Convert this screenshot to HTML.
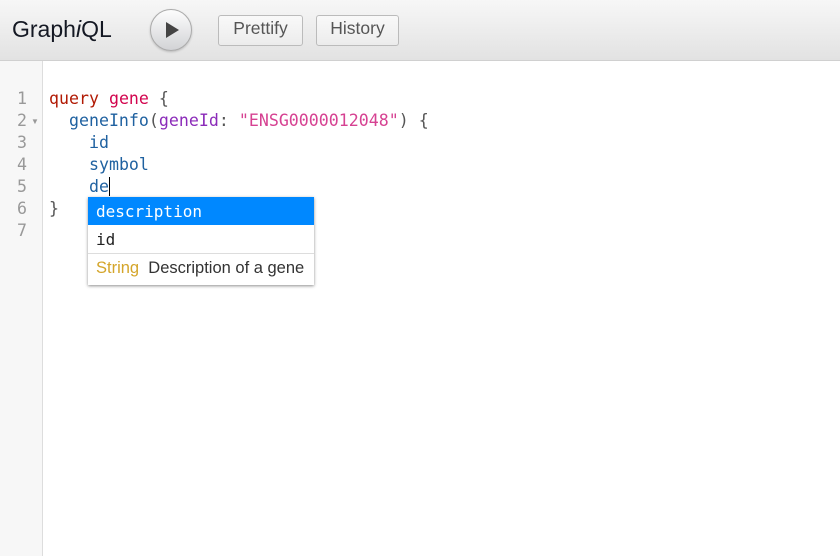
<!DOCTYPE html>
<html><head><style>
body{margin:0;width:840px;height:556px;overflow:hidden;background:#fff;font-family:"Liberation Sans",sans-serif;position:relative}
.top{position:absolute;left:0;top:0;width:840px;height:61px;background:linear-gradient(#f7f7f7,#e2e2e2);border-bottom:1px solid #d0d0d0;box-sizing:border-box}
.title{position:absolute;left:12px;top:16px;font-size:23px;color:#141823}
.exec{position:absolute;left:150px;top:9px;width:42px;height:42px;border-radius:50%;box-sizing:border-box;border:1px solid #aaa;background:linear-gradient(#fdfdfd,#d2d3d6);box-shadow:0 1px 2px rgba(0,0,0,.2)}
.btn{position:absolute;top:15px;height:31px;box-sizing:border-box;border:1px solid #bbb;border-radius:3px;background:linear-gradient(#f9f9f9,#ececec);font-size:17.5px;color:#555;text-align:center;line-height:25px}
.gut{position:absolute;left:0;top:61px;width:43px;height:495px;background:#f7f7f7;border-right:1px solid #ddd;box-sizing:border-box}
.code{position:absolute;top:88px;font-family:"DejaVu Sans Mono",monospace;font-size:16.6px;line-height:22px;white-space:pre}
.ln{left:0;width:27px;text-align:right;color:#999}
.src{left:49px;color:#555}
.k{color:#b11a04}.d{color:#d2054e}.f{color:#1f61a0}.a{color:#8b2bb9}.s{color:#d64292}
.hint{position:absolute;left:88px;top:197px;width:226px;background:#fff;box-shadow:0 1px 3px rgba(0,0,0,.45);font-family:"DejaVu Sans Mono",monospace;font-size:16px}
.hint div{height:28px;line-height:29px;padding-left:8px}
.sel{background:#08f;color:#fff}
.info{border-top:1px solid #ddd;font-family:"Liberation Sans",sans-serif;font-size:16.5px;color:#333;height:31px!important;line-height:29px!important}
</style></head><body>
<div class="top">
<div class="title">Graph<i>i</i>QL</div>
<div class="exec"><svg width="40" height="40" viewBox="0 0 40 40" style="position:absolute;left:0;top:0"><path d="M15 12 L28 20 L15 28 Z" fill="#444"/></svg></div>
<div class="btn" style="left:218px;width:85px">Prettify</div>
<div class="btn" style="left:316px;width:83px">History</div>
</div>
<div class="gut"></div>
<div class="code ln">1
2
3
4
5
6
7</div>
<div style="position:absolute;left:31px;top:117px;font-size:8px;color:#999">▼</div>
<div class="code src"><span class="k">query</span> <span class="d">gene</span> {
  <span class="f">geneInfo</span>(<span class="a">geneId</span>: <span class="s">"ENSG0000012048"</span>) {
    <span class="f">id</span>
    <span class="f">symbol</span>
    <span class="f">de</span><span style="border-left:1.5px solid #000;margin-left:0"></span>
}</div>
<div class="hint">
<div class="sel">description</div>
<div style="color:#222">id</div>
<div class="info"><span style="color:#d4a52a">String</span> &nbsp;Description of a gene</div>
</div>
</body></html>
